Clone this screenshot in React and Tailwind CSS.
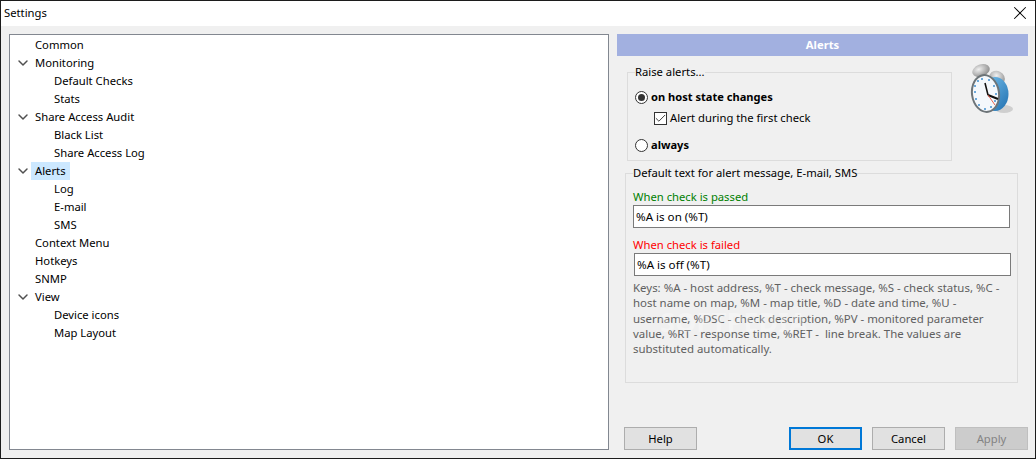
import React from 'react';
import { X, ChevronDown, Check } from 'lucide-react';

const TREE = [
  { label: 'Common', level: 0 },
  { label: 'Monitoring', level: 0, open: true },
  { label: 'Default Checks', level: 1 },
  { label: 'Stats', level: 1 },
  { label: 'Share Access Audit', level: 0, open: true },
  { label: 'Black List', level: 1 },
  { label: 'Share Access Log', level: 1 },
  { label: 'Alerts', level: 0, open: true, selected: true },
  { label: 'Log', level: 1 },
  { label: 'E-mail', level: 1 },
  { label: 'SMS', level: 1 },
  { label: 'Context Menu', level: 0 },
  { label: 'Hotkeys', level: 0 },
  { label: 'SNMP', level: 0 },
  { label: 'View', level: 0, open: true },
  { label: 'Device icons', level: 1 },
  { label: 'Map Layout', level: 1 },
];

function TreeRow({ item }) {
  return (
    <div className="flex h-[18px] items-center">
      <div className={item.level === 1 ? 'w-[44px] shrink-0' : 'w-[25px] shrink-0'}>
        {item.open && <ChevronDown size={16} strokeWidth={2.2} className="ml-[5px] text-[#505050]" />}
      </div>
      <span className={`flex h-[18px] items-center ${item.selected ? 'bg-[#cce8ff] -ml-[4px] px-[4px]' : ''}`}>{item.label}</span>
    </div>
  );
}

function Clock() {
  return (
    <svg width="46" height="50" viewBox="0 0 46 50" className="shrink-0">
      <defs>
        <radialGradient id="bell" cx="40%" cy="35%" r="70%">
          <stop offset="0" stopColor="#f0f0f0" />
          <stop offset="1" stopColor="#8a8a8a" />
        </radialGradient>
        <linearGradient id="body" x1="0" y1="0" x2="1" y2="1">
          <stop offset="0" stopColor="#7cc4ee" />
          <stop offset="1" stopColor="#1f6fb0" />
        </linearGradient>
      </defs>
      <ellipse cx="35" cy="45" rx="9" ry="4" fill="#cfcfcf" />
      <ellipse cx="12" cy="6.5" rx="9" ry="6" fill="url(#bell)" transform="rotate(-20 12 6.5)" />
      <ellipse cx="28" cy="14" rx="8" ry="7" fill="url(#bell)" transform="rotate(25 28 14)" />
      <ellipse cx="26" cy="30" rx="13.5" ry="17" fill="url(#body)" />
      <ellipse cx="16.5" cy="29.5" rx="14.5" ry="19.5" fill="#6d7478" transform="rotate(-8 16.5 29.5)" />
      <ellipse cx="16.5" cy="29.5" rx="12.5" ry="17.5" fill="#f4f8fc" transform="rotate(-8 16.5 29.5)" />
      <g fill="#3f8fd0">
        <circle cx="13" cy="15" r="1" />
        <circle cx="20" cy="16" r="1" />
        <circle cx="25" cy="22" r="1" />
        <circle cx="27" cy="30" r="1" />
        <circle cx="26" cy="37" r="1" />
        <circle cx="22" cy="43" r="1" />
        <circle cx="16" cy="45" r="1" />
        <circle cx="10" cy="41" r="1" />
        <circle cx="7" cy="35" r="1" />
        <circle cx="6" cy="28" r="1" />
        <circle cx="6" cy="22" r="1" />
        <circle cx="9" cy="17" r="1" />
      </g>
      <path d="M19 31L16 19" stroke="#111" strokeWidth="1.5" />
      <path d="M19 31l10 4" stroke="#111" strokeWidth="2" />
      <path d="M19 31l7 10" stroke="#e0402a" strokeWidth="0.8" />
    </svg>
  );
}

function Button({ children, disabled, primary }) {
  let look = 'border border-[#adadad] bg-[#e1e1e1] text-black';
  if (primary) look = 'border-2 border-[#0078d7] bg-[#e1e1e1] text-black';
  if (disabled) look = 'border border-[#bfbfbf] bg-[#cccccc] text-[#838383]';
  return <button className={`h-[23px] w-[73px] ${look}`}>{children}</button>;
}

export default function App() {
  return (
    <div className="flex h-[459px] w-[1036px] flex-col overflow-hidden border border-[#1c1c1c] bg-[#f0f0f0] text-[11.25px] leading-[16px] text-black font-['Noto_Sans',sans-serif]">
      {/* Title bar */}
      <div className="flex h-[25px] shrink-0 items-center justify-between bg-white pl-[3px] pr-[4px]">
        <span className="-mt-[1px]">Settings</span>
        <X size={22} strokeWidth={1.1} className="-mt-[1px] text-black" />
      </div>

      <div className="flex min-h-0 flex-1 gap-[8px] pb-[8px] pl-[8px] pr-[7px] pt-[8px]">
        {/* Tree */}
        <div className="w-[600px] shrink-0 border border-[#828790] bg-white pt-[1px]">
          {TREE.map(item => <TreeRow key={item.label} item={item} />)}
        </div>

        {/* Right pane */}
        <div className="flex min-w-0 flex-1 flex-col">
          <div className="flex h-[22px] shrink-0 items-center justify-center bg-[#a2b0e0] font-bold text-white">Alerts</div>

          <div className="mt-[8px] flex items-start pl-[10px]">
            <fieldset className="h-[97px] w-[325px] shrink-0 border border-[#dcdcdc] pl-[7px]">
              <legend className="h-[16px]">Raise alerts...</legend>
              <div className="mt-[8px] flex h-[18px] items-center gap-[3px] text-[11.1px] font-bold">
                <span className="flex h-[13px] w-[13px] items-center justify-center rounded-full border border-[#333] bg-white">
                  <span className="h-[7px] w-[7px] rounded-full bg-[#333]" />
                </span>
                on host state changes
              </div>
              <div className="mt-[3px] ml-[19px] flex h-[18px] items-center gap-[3px]">
                <span className="flex h-[13px] w-[13px] items-center justify-center border border-[#333] bg-white">
                  <Check size={13} strokeWidth={1.6} className="shrink-0 text-[#222]" />
                </span>
                Alert during the first check
              </div>
              <div className="mt-[9px] flex h-[18px] items-center gap-[3px] text-[11.1px] font-bold">
                <span className="h-[13px] w-[13px] rounded-full border border-[#333] bg-white" />
                always
              </div>
            </fieldset>
            <div className="ml-[17px]"><Clock /></div>
          </div>

          <fieldset className="relative ml-[8px] mt-[4px] h-[218px] w-[393px] shrink-0 border border-[#dcdcdc] pl-[7px]">
            <legend className="h-[16px]">Default text for alert message, E-mail, SMS</legend>
            <div className="mt-[8px] text-[#008000]">When check is passed</div>
            <div className="flex h-[23px] w-[377px] items-center border border-[#7a7a7a] bg-white pl-[2px] text-[11.6px]">%A is on (%T)</div>
            <div className="mt-[9px] text-[#ff0000]">When check is failed</div>
            <div className="ml-[1px] flex h-[23px] w-[377px] items-center border border-[#7a7a7a] bg-white pl-[2px] text-[11.6px]">%A is off (%T)</div>
            <p className="mt-[4px] w-[375px] whitespace-pre-wrap text-[11.45px] leading-[15.25px] text-[#606060]">
              Keys: %A - host address, %T - check message, %S - check status, %C - host name on map, %M - map title, %D - date and time, %U - username, %DSC - check description, %PV - monitored parameter value, %RT - response time, %RET -  line break. The values are substituted automatically.
            </p>
            {/* faint watermark over the text */}
            <span className="pointer-events-none absolute left-[34px] top-[126px] text-[27px] font-bold leading-[30px] text-white/30">SOFTPEDIA</span>
          </fieldset>

          {/* Buttons */}
          <div className="mt-auto flex items-center pl-[7px]">
            <Button>Help</Button>
            <div className="ml-auto flex gap-[10px]">
              <Button primary>OK</Button>
              <Button>Cancel</Button>
              <Button disabled>Apply</Button>
            </div>
          </div>
        </div>
      </div>
    </div>
  );
}
